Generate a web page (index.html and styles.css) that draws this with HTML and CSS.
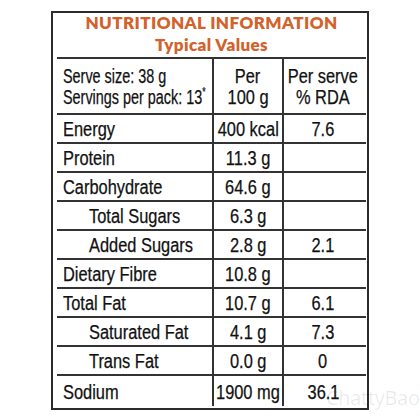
FILE: index.html
```html
<!DOCTYPE html>
<html lang="en">
<head>
    <meta charset="UTF-8">
    <meta name="viewport" content="width=device-width, initial-scale=1.0">
    <title>Nutritional Information</title>
    <link rel="stylesheet" href="styles.css">
</head>
<body>
    <div class="panel">
        <div class="title">
            <div>NUTRITIONAL INFORMATION</div>
            <div>Typical Values</div>
        </div>

        <div class="facts">
            <div class="cell head first">
                <span class="t">Serve size: 38 g</span>
                <span class="t">Servings per pack: 13<sup>*</sup></span>
            </div>
            <div class="cell head mid">
                <span class="t">Per</span>
                <span class="t">100 g</span>
            </div>
            <div class="cell head last">
                <span class="t">Per serve</span>
                <span class="t">% RDA</span>
            </div>

            <div class="cell first"><span class="t">Energy</span></div>
            <div class="cell mid"><span class="t">400 kcal</span></div>
            <div class="cell last"><span class="t">7.6</span></div>

            <div class="cell first"><span class="t">Protein</span></div>
            <div class="cell mid"><span class="t">11.3 g</span></div>
            <div class="cell last"></div>

            <div class="cell first"><span class="t">Carbohydrate</span></div>
            <div class="cell mid"><span class="t">64.6 g</span></div>
            <div class="cell last"></div>

            <div class="cell first sub"><span class="t">Total Sugars</span></div>
            <div class="cell mid"><span class="t">6.3 g</span></div>
            <div class="cell last"></div>

            <div class="cell first sub"><span class="t">Added Sugars</span></div>
            <div class="cell mid"><span class="t">2.8 g</span></div>
            <div class="cell last"><span class="t">2.1</span></div>

            <div class="cell first"><span class="t">Dietary Fibre</span></div>
            <div class="cell mid"><span class="t">10.8 g</span></div>
            <div class="cell last"></div>

            <div class="cell first"><span class="t">Total Fat</span></div>
            <div class="cell mid"><span class="t">10.7 g</span></div>
            <div class="cell last"><span class="t">6.1</span></div>

            <div class="cell first sub"><span class="t">Saturated Fat</span></div>
            <div class="cell mid"><span class="t">4.1 g</span></div>
            <div class="cell last"><span class="t">7.3</span></div>

            <div class="cell first sub"><span class="t">Trans Fat</span></div>
            <div class="cell mid"><span class="t">0.0 g</span></div>
            <div class="cell last"><span class="t">0</span></div>

            <div class="cell first"><span class="t">Sodium</span></div>
            <div class="cell mid"><span class="t">1900 mg</span></div>
            <div class="cell last"><span class="t">36.1</span></div>
        </div>
    </div>

    <div class="watermark">ChattyBao</div>
</body>
</html>
```
FILE: styles.css
```css
body {
    margin: 0;
    background-color: #fff;
    font-family: "Liberation Sans", Arial, sans-serif;
    color: #111;
}
.panel {
    margin: 11px 0 0 51px;
    width: 318px;
    height: 399px;
    box-sizing: border-box;
    border: 2px solid #2b2b2b;
    padding: 0 1px 0 4px;
}
.title {
    height: 44px;
    box-sizing: border-box;
    text-align: center;
    font-family: Lato, "Open Sans", sans-serif;
    font-weight: 800;
    font-size: 17px;
    letter-spacing: 0.4px;
    line-height: 22px;
    color: #d2622b;
    margin-top: -1px;
    padding-bottom: 0;
}
.facts {
    display: grid;
    grid-template-columns: 155px 70px 84px;
    grid-template-rows: 56px repeat(9, 29px) 32px;
    font-size: 20px;
    margin-top: 1px;
}
.cell {
    box-sizing: border-box;
    border-top: 2px solid #333;
    display: flex;
    align-items: center;
    white-space: nowrap;
    line-height: 22px;
    padding-top: 1px;
    -webkit-text-stroke: 0.25px #111;
}
.cell.first {
    padding-left: 6px;
}
.cell.sub {
    padding-left: 32px;
}
.cell.mid,
.cell.last {
    border-left: 2px solid #333;
    justify-content: center;
}
.cell.last {
    padding-right: 4px;
}
.cell.head {
    flex-direction: column;
    justify-content: center;
    line-height: 21px;
}
.cell.head.first {
    align-items: flex-start;
}
.t {
    display: inline-block;
    transform: scaleX(0.82);
}
.first .t {
    transform-origin: left center;
}
.head.first .t {
    transform: scaleX(0.72);
}
.mid .t,
.last .t {
    transform-origin: center;
}
sup {
    font-size: 12px;
    line-height: 0;
}
.watermark {
    position: absolute;
    left: 326px;
    top: 384px;
    font-family: "Open Sans", sans-serif;
    font-size: 20px;
    color: rgba(0, 0, 0, 0.09);
    letter-spacing: -0.3px;
}
```
